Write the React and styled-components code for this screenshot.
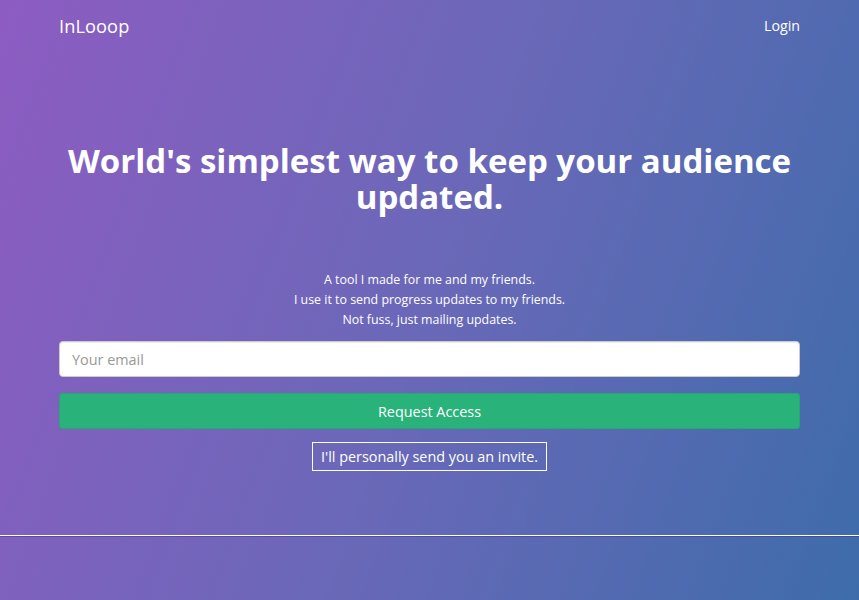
import React from "react";
import styled, { createGlobalStyle } from "styled-components";

const GlobalStyle = createGlobalStyle`
  html, body {
    margin: 0;
    padding: 0;
  }
  body {
    font-family: "Open Sans", "Noto Sans", sans-serif;
    color: #fff;
  }
`;

const Page = styled.div`
  min-height: 600px;
  background: linear-gradient(110deg, #8d5cc2 0%, #6a68b8 50%, #3e6cab 100%);
  overflow: hidden;
`;

const Container = styled.div`
  width: 741px;
  margin: 0 auto;
`;

const Header = styled.header`
  display: flex;
  align-items: center;
  justify-content: space-between;
  height: 52px;
`;

const Brand = styled.div`
  font-size: 18.2px;
  letter-spacing: 0.1px;
`;

const NavLink = styled.a`
  font-size: 14.2px;
  margin-top: -2px;
  color: #fff;
  text-decoration: none;
  cursor: pointer;
`;

const Hero = styled.section`
  display: flex;
  flex-direction: column;
  align-items: center;
  padding-top: 91px;
`;

const Title = styled.h1`
  margin: 0;
  font-size: 33px;
  line-height: 36px;
  font-weight: 700;
  text-align: center;
`;

const Blurb = styled.p`
  margin: 55px 0 0;
  font-size: 12.4px;
  line-height: 20px;
  text-align: center;
`;

const EmailInput = styled.input`
  box-sizing: border-box;
  width: 100%;
  height: 36px;
  margin-top: 11px;
  padding: 0 12px;
  border: 1px solid #ccc;
  border-radius: 4px;
  background: #fff;
  font-family: inherit;
  font-size: 14.4px;
  color: #333;
  box-shadow: inset 0 1px 1px rgba(0, 0, 0, 0.075);
  &::placeholder {
    color: #999;
  }
`;

const Submit = styled.button`
  width: 100%;
  height: 36px;
  margin-top: 16px;
  border: 1px solid #27a872;
  border-radius: 3px;
  background: #2ab27b;
  color: #fff;
  font-family: inherit;
  font-size: 14.4px;
  cursor: pointer;
`;

const Note = styled.div`
  margin-top: 13px;
  padding: 3px 8px;
  border: 1px solid #fff;
  font-size: 14.4px;
  line-height: 21px;
`;

const Divider = styled.hr`
  margin: 64px 0 0;
  border: 0;
  border-top: 1px solid #fff;
  border-bottom: 1px solid rgba(60, 50, 120, 0.45);
`;

export default function App() {
  return (
    <>
      <GlobalStyle />
      <Page>
        <Container>
          <Header>
            <Brand>InLooop</Brand>
            <NavLink>Login</NavLink>
          </Header>
          <Hero>
            <Title>
              World's simplest way to keep your audience
              <br />
              updated.
            </Title>
            <Blurb>
              A tool I made for me and my friends.
              <br />
              I use it to send progress updates to my friends.
              <br />
              Not fuss, just mailing updates.
            </Blurb>
            <EmailInput type="email" placeholder="Your email" />
            <Submit>Request Access</Submit>
            <Note>I'll personally send you an invite.</Note>
          </Hero>
        </Container>
        <Divider />
      </Page>
    </>
  );
}
